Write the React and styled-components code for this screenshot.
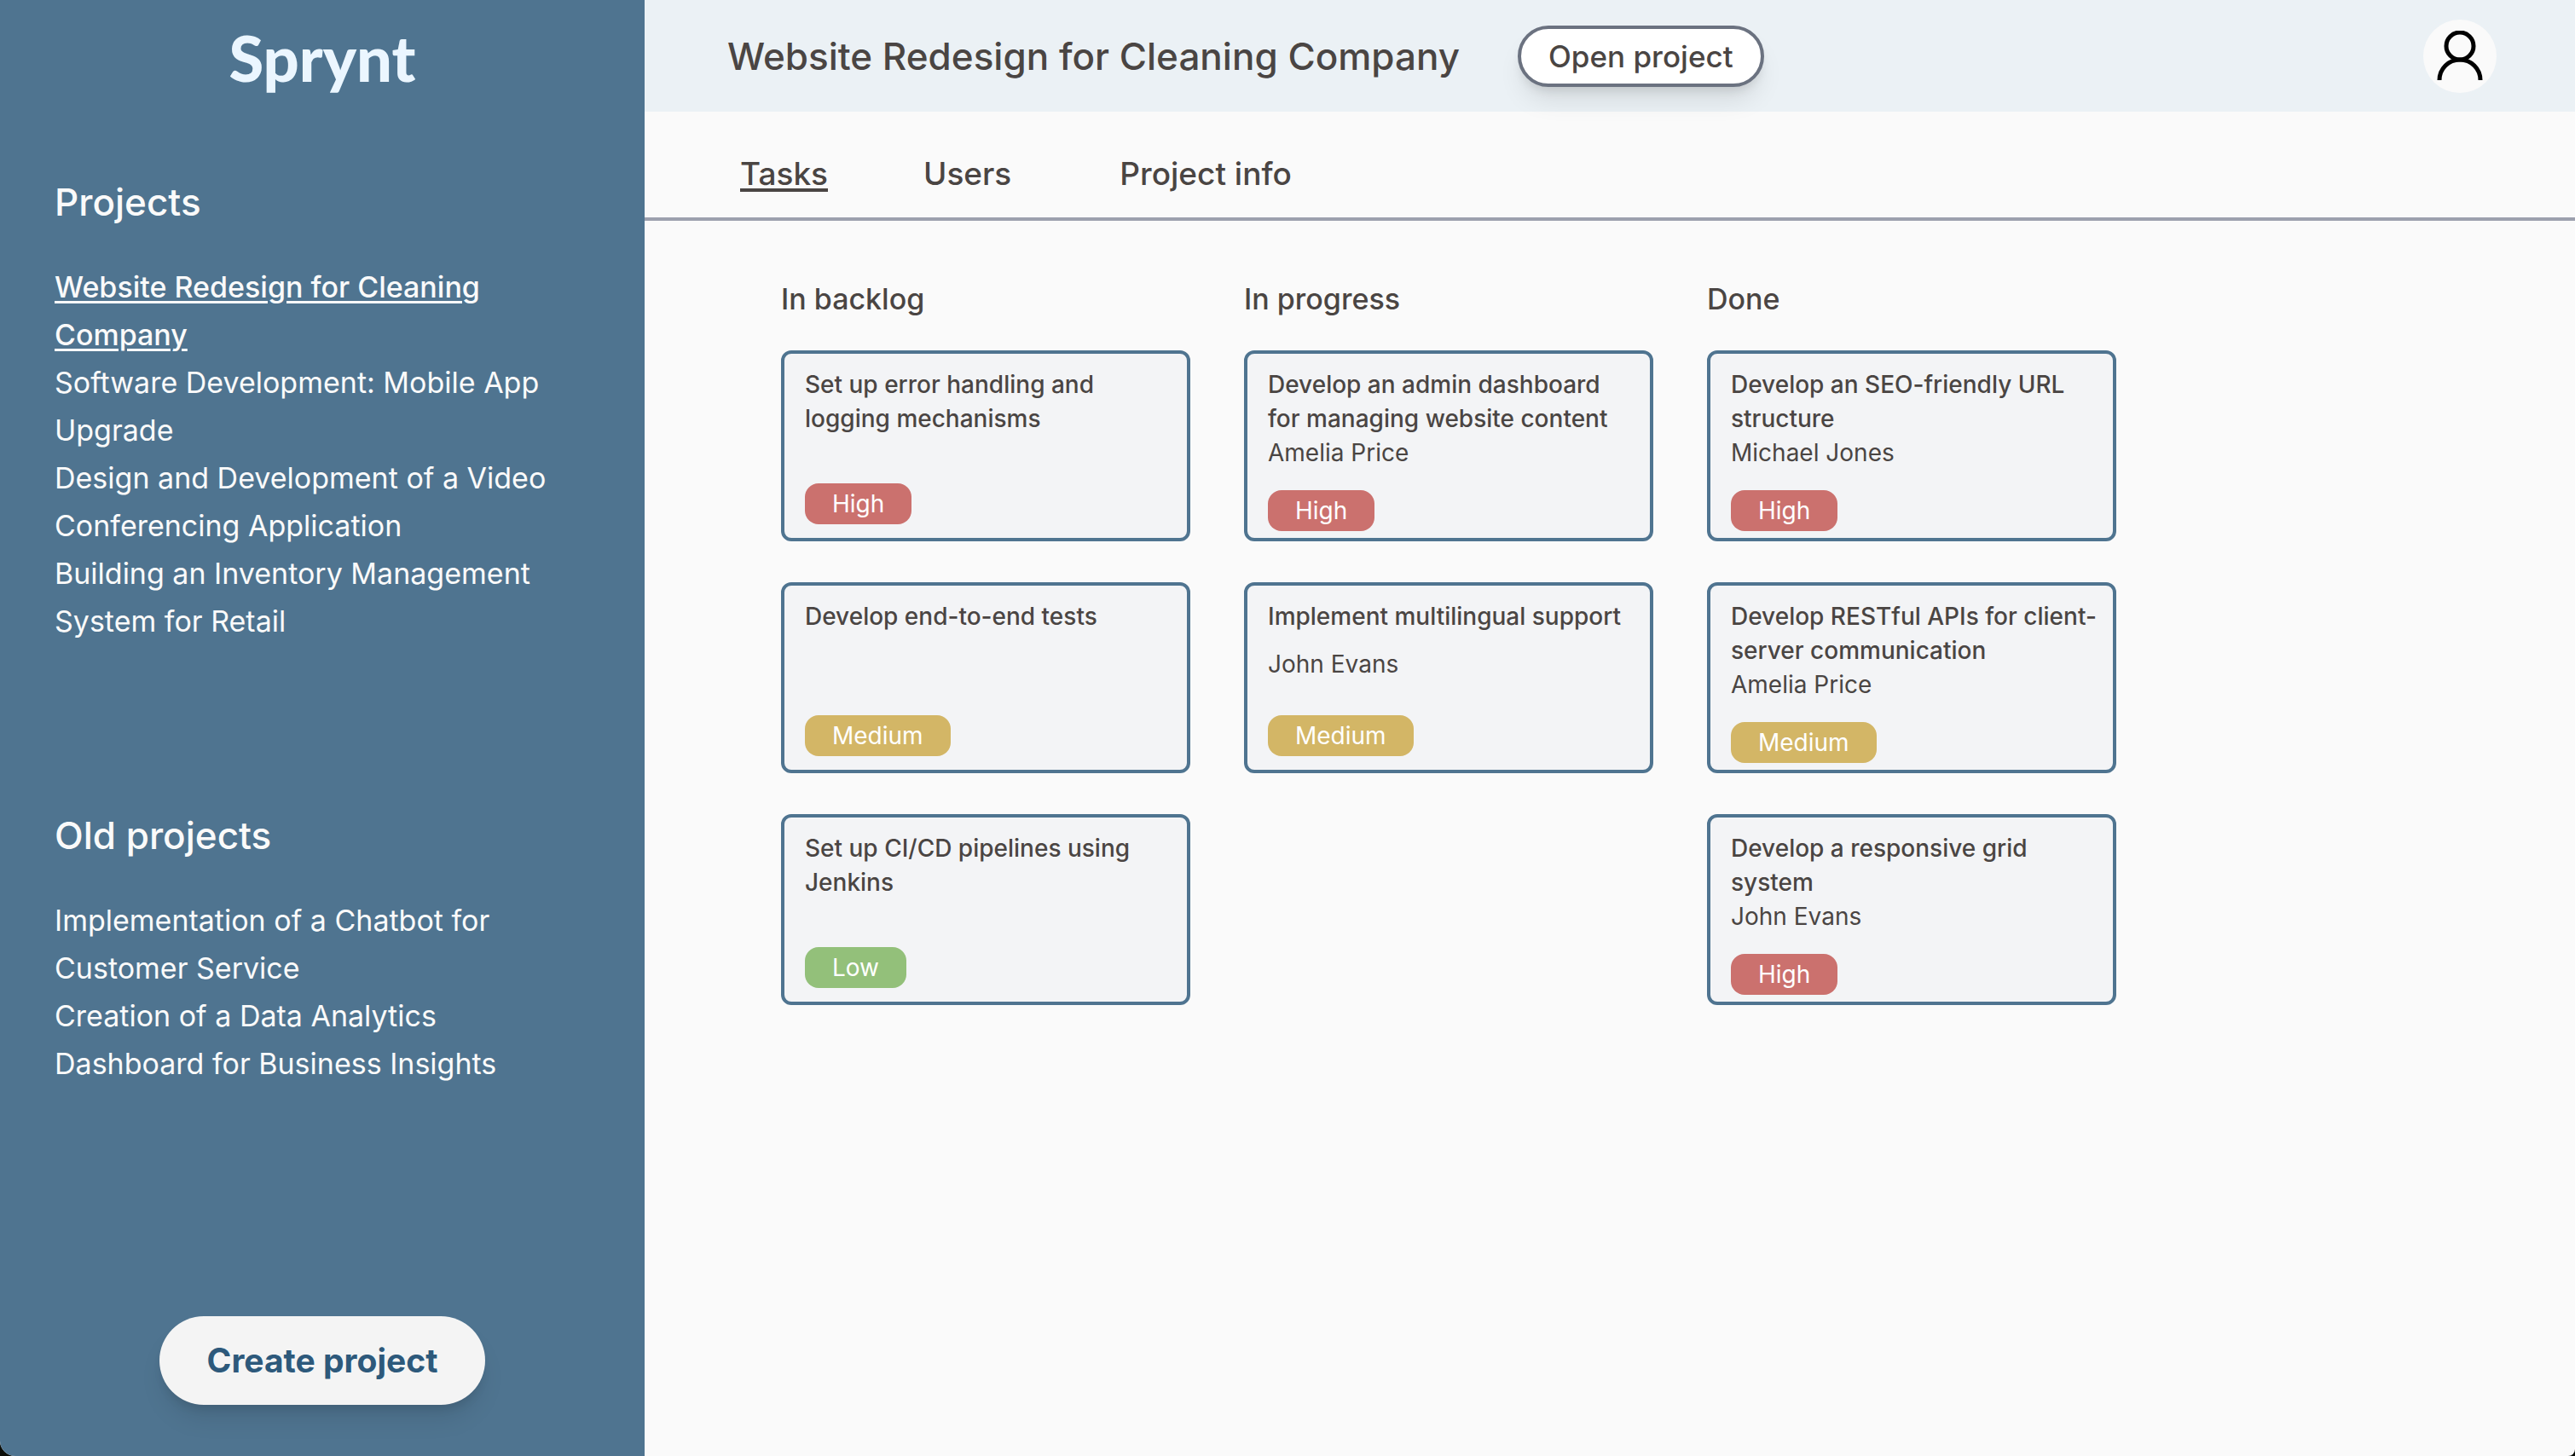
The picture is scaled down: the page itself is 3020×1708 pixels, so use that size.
import React from 'react';
import styled, { createGlobalStyle } from 'styled-components';

const GlobalStyle = createGlobalStyle`
  *, *::before, *::after { box-sizing: border-box; }
  body {
    margin: 0;
    background: #0b0d08;
    color: #4a4543;
    font-family: Inter, "Liberation Sans", sans-serif;
    font-size: 34px;
    line-height: 56px;
  }
  h1, h2, h3, p, ul { margin: 0; padding: 0; }
  ul { list-style: none; }
  button { font-family: inherit; cursor: pointer; }
`;

const Page = styled.div`
  display: grid;
  grid-template-columns: 756px 1fr;
  min-height: 100vh;
  background: #fafafa;
  border-radius: 0 0 8px 18px;
  overflow: hidden;
`;

const Sidebar = styled.aside`
  display: flex;
  flex-direction: column;
  padding: 24px 64px 60px;
  background: #4f7490;
  color: #fafafa;
`;

const Logo = styled.div`
  font-family: Lato, sans-serif;
  font-size: 74px;
  font-weight: 900;
  line-height: 88px;
  text-align: center;
  color: #ebf6ff;
`;

const ProjectGroup = styled.section`
  margin-top: ${({ $gap }) => $gap}px;
`;

const GroupTitle = styled.h2`
  margin-bottom: 40px;
  font-size: 44px;
  font-weight: 500;
  line-height: 64px;
`;

const ProjectLink = styled.a`
  display: block;
  color: inherit;
  font-weight: ${({ $active }) => ($active ? 500 : 400)};
  text-decoration: ${({ $active }) => ($active ? 'underline' : 'none')};
  text-decoration-thickness: 3px;
  text-underline-offset: 4px;
`;

const CreateButton = styled.button`
  align-self: center;
  margin-top: auto;
  padding: 24px 56px;
  border: 0;
  border-radius: 52px;
  background: #f4f4f4;
  color: #2d597b;
  font-size: 39px;
  font-weight: 700;
  line-height: 56px;
  box-shadow: 0 20px 30px -6px rgba(0, 0, 0, 0.1), 0 8px 12px -4px rgba(0, 0, 0, 0.1);
`;

const Main = styled.main`
  min-width: 0;
`;

const Header = styled.header`
  display: flex;
  align-items: center;
  height: 131px;
  padding: 0 92px 0 97px;
  background: #ebf1f5;
`;

const Title = styled.h1`
  font-size: 44px;
  font-weight: 500;
  line-height: 64px;
`;

const OpenButton = styled.button`
  margin-left: 68px;
  padding: 4px 32px;
  border: 4px solid #6b7280;
  border-radius: 36px;
  background: #fff;
  color: inherit;
  font-size: 35px;
  font-weight: 500;
  line-height: 56px;
  box-shadow: 0 20px 30px -6px rgba(0, 0, 0, 0.1), 0 8px 12px -4px rgba(0, 0, 0, 0.1);
`;

const Avatar = styled.button`
  display: grid;
  place-items: center;
  width: 86px;
  height: 86px;
  margin-left: auto;
  padding: 0;
  border: 0;
  border-radius: 50%;
  background: #fafafa;
`;

const Tabs = styled.nav`
  display: flex;
  padding: 45px 112px 23px;
  border-bottom: 4px solid #9ca0ae;
`;

const Tab = styled.a`
  color: inherit;
  font-size: 37px;
  font-weight: 500;
  margin-right: ${({ $gap }) => $gap || 0}px;
  text-decoration: ${({ $active }) => ($active ? 'underline' : 'none')};
  text-decoration-thickness: 4px;
  text-underline-offset: 4px;
`;

const Board = styled.div`
  display: grid;
  grid-template-columns: repeat(3, minmax(0, 480px));
  column-gap: 63px;
  padding: 64px 160px;
`;

const ColumnTitle = styled.h2`
  margin-bottom: 32px;
  font-size: 34px;
  font-weight: 500;
`;

const CardList = styled.ul`
  display: grid;
  gap: 48px;
`;

const Card = styled.li`
  min-height: 224px;
  padding: 16px 16px 8px 24px;
  border: 4px solid #4f7490;
  border-radius: 12px;
  background: #f3f4f6;
  font-size: 28px;
  line-height: 40px;
`;

const CardText = styled.div`
  min-height: 112px;
  margin-bottom: 24px;
`;

const CardTitle = styled.h3`
  min-height: 56px;
  font-size: 28px;
  font-weight: 500;
`;

const badgeColors = { High: '#cb716e', Medium: '#d3b666', Low: '#93c07a' };

const Badge = styled.span`
  display: block;
  width: fit-content;
  padding: 4px 32px;
  border-radius: 16px;
  background: ${({ $level }) => badgeColors[$level]};
  color: #fff;
`;

const projects = [
  'Website Redesign for Cleaning Company',
  'Software Development: Mobile App Upgrade',
  'Design and Development of a Video Conferencing Application',
  'Building an Inventory Management System for Retail',
];

const oldProjects = [
  'Implementation of a Chatbot for Customer Service',
  'Creation of a Data Analytics Dashboard for Business Insights',
];

const columns = [
  {
    name: 'In backlog',
    tasks: [
      { title: 'Set up error handling and logging mechanisms', level: 'High' },
      { title: 'Develop end-to-end tests', level: 'Medium' },
      { title: 'Set up CI/CD pipelines using Jenkins', level: 'Low' },
    ],
  },
  {
    name: 'In progress',
    tasks: [
      { title: 'Develop an admin dashboard for managing website content', user: 'Amelia Price', level: 'High' },
      { title: 'Implement multilingual support', user: 'John Evans', level: 'Medium' },
    ],
  },
  {
    name: 'Done',
    tasks: [
      { title: 'Develop an SEO-friendly URL structure', user: 'Michael Jones', level: 'High' },
      { title: 'Develop RESTful APIs for client-server communication', user: 'Amelia Price', level: 'Medium' },
      { title: 'Develop a responsive grid system', user: 'John Evans', level: 'High' },
    ],
  },
];

function ProjectList({ title, items, active, gap }) {
  return (
    <ProjectGroup $gap={gap}>
      <GroupTitle>{title}</GroupTitle>
      <ul>
        {items.map((item) => (
          <li key={item}>
            <ProjectLink href="#" $active={item === active}>{item}</ProjectLink>
          </li>
        ))}
      </ul>
    </ProjectGroup>
  );
}

function UserIcon() {
  return (
    <svg width="54" height="60" viewBox="0 0 54 60" fill="none" stroke="#000" strokeWidth="5" aria-hidden="true">
      <circle cx="27" cy="18" r="16" />
      <path d="M3 58a24 24 0 0 1 48 0" />
    </svg>
  );
}

export default function App() {
  return (
    <>
      <GlobalStyle />
      <Page>
        <Sidebar>
          <Logo>Sprynt</Logo>
          <ProjectList title="Projects" items={projects} active={projects[0]} gap={93} />
          <ProjectList title="Old projects" items={oldProjects} gap={191} />
          <CreateButton type="button">Create project</CreateButton>
        </Sidebar>
        <Main>
          <Header>
            <Title>{projects[0]}</Title>
            <OpenButton type="button">Open project</OpenButton>
            <Avatar type="button" aria-label="Account"><UserIcon /></Avatar>
          </Header>
          <Tabs>
            <Tab href="#" $active $gap={112}>Tasks</Tab>
            <Tab href="#" $gap={127}>Users</Tab>
            <Tab href="#">Project info</Tab>
          </Tabs>
          <Board>
            {columns.map((column) => (
              <section key={column.name}>
                <ColumnTitle>{column.name}</ColumnTitle>
                <CardList>
                  {column.tasks.map((task) => (
                    <Card key={task.title}>
                      <CardText>
                        <CardTitle>{task.title}</CardTitle>
                        {task.user && <p>{task.user}</p>}
                      </CardText>
                      <Badge $level={task.level}>{task.level}</Badge>
                    </Card>
                  ))}
                </CardList>
              </section>
            ))}
          </Board>
        </Main>
      </Page>
    </>
  );
}
